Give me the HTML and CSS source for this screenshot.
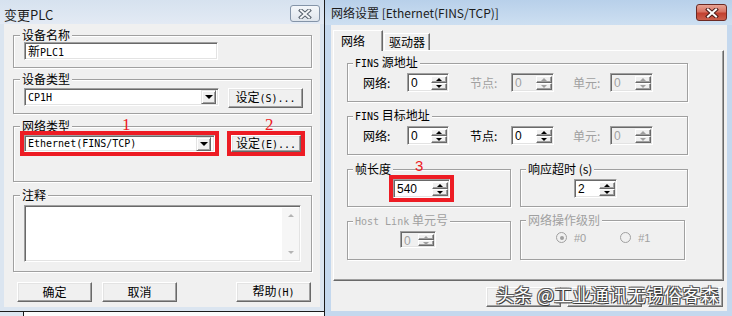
FILE: index.html
```html
<!DOCTYPE html>
<html lang="zh-CN">
<head>
    <meta charset="UTF-8">
    <meta name="viewport" content="width=device-width, initial-scale=1.0">
    <title>变更PLC - 网络设置</title>
    <link rel="stylesheet" href="styles.css">
</head>
<body>
    <div class="screen">
        <!-- left dialog: 变更PLC (inactive) -->
        <div class="left-col">
            <div class="window win-plc">
                <div class="titlebar">
                    <span class="title">变更PLC</span>
                    <span class="close-btn">
                        <svg width="14" height="10" viewBox="0 0 14 10">
                            <path d="M3 1.5 L11 8.5 M11 1.5 L3 8.5" stroke="#56606c" stroke-width="4" stroke-linecap="square"/>
                            <path d="M3 1.5 L11 8.5 M11 1.5 L3 8.5" stroke="#f4f6f8" stroke-width="2" stroke-linecap="square"/>
                        </svg>
                    </span>
                </div>
                <div class="client plc-client">
                    <fieldset class="group g-name">
                        <legend>设备名称</legend>
                        <div class="edit name-edit">新<span class="lat">PLC1</span></div>
                    </fieldset>

                    <fieldset class="group g-type">
                        <legend>设备类型</legend>
                        <div class="ctl-row">
                            <div class="combo combo-type"><span class="lat">CP1H</span><span class="drop"></span></div>
                            <button class="btn btn-set">设定<span class="lat">(S)...</span></button>
                        </div>
                    </fieldset>

                    <fieldset class="group g-net">
                        <legend>网络类型</legend>
                        <div class="ctl-row">
                            <div class="combo combo-net marked"><span class="lat">Ethernet(FINS/TCP)</span><span class="drop"></span></div>
                            <button class="btn btn-set-e marked">设定<span class="lat">(E)...</span></button>
                        </div>
                    </fieldset>

                    <fieldset class="group g-note">
                        <legend>注释</legend>
                        <div class="memo">
                            <div class="vscroll"><i class="sa up"></i><i class="sa dn"></i></div>
                        </div>
                    </fieldset>

                    <div class="btn-row">
                        <button class="btn">确定</button>
                        <button class="btn">取消</button>
                        <button class="btn btn-help">帮助<span class="lat">(H)</span></button>
                    </div>

                    <span class="mark mark-1">1</span>
                    <span class="mark mark-2">2</span>
                </div>
            </div>
            <div class="under">
                <div class="under-a"></div>
                <div class="under-b"></div>
            </div>
        </div>

        <!-- right dialog: 网络设置 (active) -->
        <div class="window win-net">
            <div class="titlebar">
                <span class="title">网络设置 [Ethernet(FINS/TCP)]</span>
                <span class="close-btn red">
                    <svg width="14" height="10" viewBox="0 0 14 10">
                        <path d="M3 1.5 L11 8.5 M11 1.5 L3 8.5" stroke="#4a1c18" stroke-width="4" stroke-linecap="square"/>
                        <path d="M3 1.5 L11 8.5 M11 1.5 L3 8.5" stroke="#ffffff" stroke-width="2" stroke-linecap="square"/>
                    </svg>
                </span>
            </div>
            <div class="client net-client">
                <div class="tabs">
                    <div class="tab active">网络</div>
                    <div class="tab">驱动器</div>
                </div>
                <div class="panel">
                    <fieldset class="group rg g-src">
                        <legend><span class="lat">FINS</span> 源地址</legend>
                        <div class="addr-row">
                            <span class="lbl">网络:</span>
                            <div class="spin"><span class="val">0</span><span class="arrows"><i class="up"></i><i class="dn"></i></span></div>
                            <span class="lbl lbl-2 off">节点:</span>
                            <div class="spin off"><span class="val">0</span><span class="arrows"><i class="up"></i><i class="dn"></i></span></div>
                            <span class="lbl lbl-3 off">单元:</span>
                            <div class="spin off"><span class="val">0</span><span class="arrows"><i class="up"></i><i class="dn"></i></span></div>
                        </div>
                    </fieldset>

                    <fieldset class="group rg g-dst">
                        <legend><span class="lat">FINS</span> 目标地址</legend>
                        <div class="addr-row">
                            <span class="lbl">网络:</span>
                            <div class="spin"><span class="val">0</span><span class="arrows"><i class="up"></i><i class="dn"></i></span></div>
                            <span class="lbl lbl-2">节点:</span>
                            <div class="spin"><span class="val">0</span><span class="arrows"><i class="up"></i><i class="dn"></i></span></div>
                            <span class="lbl lbl-3 off">单元:</span>
                            <div class="spin off"><span class="val">0</span><span class="arrows"><i class="up"></i><i class="dn"></i></span></div>
                        </div>
                    </fieldset>

                    <div class="pair">
                        <fieldset class="group rg g-frame">
                            <legend>帧长度</legend>
                            <div class="spin spin-frame marked"><span class="val">540</span><span class="arrows"><i class="up"></i><i class="dn"></i></span></div>
                        </fieldset>
                        <fieldset class="group rg g-resp">
                            <legend>响应超时 (s)</legend>
                            <div class="spin spin-resp"><span class="val">2</span><span class="arrows"><i class="up"></i><i class="dn"></i></span></div>
                        </fieldset>
                    </div>

                    <div class="pair pair-2">
                        <fieldset class="group rg g-host off">
                            <legend><span class="lat">Host Link</span> 单元号</legend>
                            <div class="spin spin-host off"><span class="val">0</span><span class="arrows"><i class="up"></i><i class="dn"></i></span></div>
                        </fieldset>
                        <fieldset class="group rg g-level off">
                            <legend>网络操作级别</legend>
                            <div class="radios">
                                <span class="radio on"></span><span class="rlab">#0</span>
                                <span class="radio r-2"></span><span class="rlab">#1</span>
                            </div>
                        </fieldset>
                    </div>
                </div>
                <div class="net-btns">
                    <button class="btn"></button>
                    <button class="btn"></button>
                    <button class="btn"></button>
                </div>
            </div>
            <span class="mark mark-3">3</span>
            <span class="watermark">头条 @工业通讯无锡俗客森</span>
        </div>
    </div>
</body>
</html>
```

FILE: styles.css
```css
* {
    margin: 0;
    padding: 0;
    box-sizing: border-box;
}

body {
    font-family: "Noto Sans CJK SC", sans-serif;
    font-size: 12px;
    color: #000;
    background: #fff;
    width: 732px;
    height: 316px;
    overflow: hidden;
}

.screen {
    display: flex;
    width: 732px;
    height: 316px;
}

.lat {
    font-family: "DejaVu Sans Mono", monospace;
    font-size: 10px;
}

/* ---------- windows ---------- */

.window {
    display: flex;
    flex-direction: column;
}

.titlebar {
    display: flex;
    justify-content: space-between;
    align-items: flex-start;
}

.title {
    font-size: 13px;
    line-height: 15px;
    color: #1c1c1c;
}

.close-btn {
    display: flex;
    align-items: center;
    justify-content: center;
    width: 30px;
    height: 17px;
    border: 1px solid #8494a8;
    border-radius: 3px;
    background: linear-gradient(#f4f7fa, #dfe5ec);
}

.close-btn.red {
    width: 31px;
    border-color: #6c2923;
    background: linear-gradient(#e7a394 0%, #d87262 45%, #c2402f 55%, #cb5f4c 100%);
}

.client {
    flex: 1;
    background: #f0f0f0;
}

/* left */
.left-col {
    width: 325px;
    display: flex;
    flex-direction: column;
    border-right: 1px solid #1b1b1b;
}

.win-plc {
    height: 311px;
    background: #dbe5f0;
}

.win-plc .titlebar {
    height: 24px;
    padding: 5px 4px 0 4px;
    background: linear-gradient(#d6e2ef, #e3eaf4);
}

.win-plc .title {
    margin-top: 2px;
}

.plc-client {
    position: relative;
    margin: 0 4px 4px;
    padding: 5px 8px 0 9px;
}

.under {
    flex: 1;
    display: flex;
    border-top: 1px solid #1b1b1b;
}

.under-a {
    width: 23px;
    background: #dde6f0;
}

.under-b {
    flex: 1;
    border-left: 1px solid #1b1b1b;
    background: #fbfbfb;
}

/* right */
.win-net {
    position: relative;
    width: 407px;
    background: #c4d8ee;
}

.win-net .titlebar {
    height: 25px;
    padding: 4px 5px 0 6px;
    background: linear-gradient(#b8d0ea, #cddff1);
}

.win-net .title {
    font-size: 12px;
    margin-top: 1px;
}

.net-client {
    margin: 0 5px 5px 6px;
    padding: 5px 4px 0 2px;
}

/* ---------- group boxes ---------- */

.group {
    border: 1px solid #a0a0a0;
    box-shadow: 1px 1px 0 #fff, inset 1px 1px 0 #fff;
    padding: 0 6px;
    min-width: 0;
}

.group legend {
    padding: 0 2px;
    line-height: 12px;
    background: #f0f0f0;
}

.g-name {
    padding-top: 1px;
    padding-bottom: 7px;
}

.g-type {
    margin-top: 5px;
    padding-top: 3px;
    padding-bottom: 5px;
}

.g-net {
    margin-top: 6px;
    padding-top: 3px;
    padding-bottom: 29px;
}

.g-note {
    margin-top: 7px;
    padding-top: 4px;
    padding-bottom: 9px;
}

/* ---------- classic controls ---------- */

.edit,
.combo,
.memo,
.spin {
    background: #fff;
    border: 1px solid;
    border-color: #a0a0a0 #fff #fff #a0a0a0;
    box-shadow: inset 1px 1px 0 #696969, inset -1px -1px 0 #e3e3e3;
}

.edit {
    width: 194px;
    height: 18px;
    margin-left: 4px;
    padding: 0 3px;
    line-height: 16px;
}

.ctl-row {
    display: flex;
    align-items: flex-start;
    margin-left: 4px;
}

.combo {
    display: flex;
    align-items: center;
    justify-content: space-between;
    padding: 2px 2px 2px 3px;
}

.combo-type {
    width: 195px;
    height: 18px;
}

.combo-net {
    width: 191px;
    height: 17px;
    padding-right: 3px;
}

.drop {
    width: 15px;
    height: 14px;
    display: flex;
    align-items: center;
    justify-content: center;
    background: #f0f0f0;
    border: 1px solid;
    border-color: #e3e3e3 #696969 #696969 #e3e3e3;
    box-shadow: inset 1px 1px 0 #fff, inset -1px -1px 0 #a0a0a0;
}

.drop::after {
    content: "";
    border-left: 4px solid transparent;
    border-right: 4px solid transparent;
    border-top: 4px solid #000;
}

.btn {
    font-family: "Noto Sans CJK SC", sans-serif;
    font-size: 12px;
    color: #000;
    width: 75px;
    height: 20px;
    background: #f0f0f0;
    border: 1px solid;
    border-color: #fff #696969 #696969 #fff;
    box-shadow: inset -1px -1px 0 #a0a0a0, inset 1px 1px 0 #e3e3e3;
    line-height: 16px;
}

.btn-set {
    margin-left: 9px;
}

.btn-set-e {
    width: 70px;
    height: 17px;
    margin-left: 16px;
    line-height: 13px;
}

.marked {
    outline: 4px solid #ed1c24;
}

.memo {
    width: 277px;
    height: 57px;
    margin-left: 4px;
    display: flex;
    justify-content: flex-end;
    padding: 2px 1px 1px 2px;
}

.vscroll {
    width: 17px;
    background: #f6f6f6;
    display: flex;
    flex-direction: column;
    justify-content: space-between;
    align-items: center;
    padding: 6px 0;
}

.sa {
    display: block;
    border-left: 3px solid transparent;
    border-right: 3px solid transparent;
}

.sa.up {
    border-bottom: 3px solid #b4b4b4;
}

.sa.dn {
    border-top: 3px solid #b4b4b4;
}

.btn-row {
    display: flex;
    gap: 10px;
    margin-top: 10px;
    padding-left: 4px;
}

.btn-help {
    margin-left: auto;
    margin-right: 1px;
}

.mark {
    position: absolute;
    font-family: "Liberation Serif", serif;
    font-size: 17px;
    line-height: 17px;
    color: #ed1c24;
}

.mark-1 {
    left: 118px;
    top: 92px;
}

.mark-2 {
    left: 261px;
    top: 92px;
}

.mark-3 {
    left: 90px;
    top: 157px;
    font-family: "Liberation Sans", sans-serif;
    font-size: 15px;
}

/* ---------- tabs ---------- */

.tabs {
    display: flex;
    align-items: flex-end;
    height: 20px;
}

.tab {
    width: 46px;
    height: 17px;
    margin-left: 1px;
    text-align: center;
    line-height: 15px;
    border: 1px solid;
    border-bottom: none;
    border-color: #fff #696969 transparent #fff;
    box-shadow: inset -1px 0 0 #a0a0a0;
}

.tab.active {
    position: relative;
    z-index: 1;
    width: 50px;
    height: 21px;
    margin-left: 0;
    margin-bottom: -1px;
    padding: 2px 0 0 7px;
    text-align: left;
    background: #f0f0f0;
}

.panel {
    width: 391px;
    height: 231px;
    border: 1px solid;
    border-color: #fff #696969 #696969 #fff;
    box-shadow: inset -1px -1px 0 #a0a0a0;
    padding: 5px 0 0 13px;
}

.rg {
    padding-left: 5px;
}

.g-src,
.g-dst {
    width: 341px;
    padding-top: 3px;
    padding-bottom: 9px;
}

.g-dst {
    margin-top: 7px;
}

.addr-row {
    display: grid;
    grid-template-columns: 44px 42px 62px 43px 56px 43px;
    align-items: center;
    margin-left: 10px;
}

.lbl-2 {
    padding-left: 21px;
}

.lbl-3 {
    padding-left: 19px;
}

.off,
.off legend {
    color: #a0a0a0;
}

.pair {
    display: flex;
    gap: 9px;
    margin-top: 8px;
}

.pair-2 {
    margin-top: 7px;
}

.g-frame,
.g-host {
    width: 164px;
}

.g-resp {
    width: 168px;
}

.g-level {
    width: 165px;
}

.g-frame,
.g-resp {
    padding-top: 4px;
    padding-bottom: 8px;
}

.g-host,
.g-level {
    padding-top: 3px;
    padding-bottom: 11px;
}

/* spin box */
.spin {
    display: flex;
    height: 19px;
    padding: 2px 1px 1px 2px;
}

.spin .val {
    flex: 1;
    font-family: "Liberation Sans", sans-serif;
    font-size: 12px;
    line-height: 15px;
    padding-left: 1px;
}

.spin .arrows {
    width: 16px;
    display: flex;
    flex-direction: column;
}

.spin .arrows i {
    flex: 1;
    display: flex;
    align-items: center;
    justify-content: center;
    background: #f0f0f0;
    border: 1px solid;
    border-color: #fff #696969 #696969 #fff;
    box-shadow: inset -1px -1px 0 #a0a0a0;
}

.spin .arrows i::after {
    content: "";
    border-left: 3px solid transparent;
    border-right: 3px solid transparent;
}

.spin .arrows .up::after {
    border-bottom: 3px solid #000;
}

.spin .arrows .dn::after {
    border-top: 3px solid #000;
}

.spin.off {
    background: #f0f0f0;
    color: #a0a0a0;
}

.spin.off .arrows .up::after {
    border-bottom-color: #a0a0a0;
}

.spin.off .arrows .dn::after {
    border-top-color: #a0a0a0;
}

.spin-frame {
    width: 57px;
    margin-left: 40px;
}

.spin-resp {
    width: 43px;
    margin-left: 48px;
}

.spin-host {
    width: 36px;
    height: 17px;
    margin-left: 47px;
}

.radios {
    display: flex;
    align-items: center;
    height: 17px;
    margin-left: 30px;
}

.radio {
    width: 11px;
    height: 11px;
    border-radius: 50%;
    border: 1px solid #a0a0a0;
    background: #f0f0f0;
    display: flex;
    align-items: center;
    justify-content: center;
}

.radio.on::after {
    content: "";
    width: 4px;
    height: 4px;
    border-radius: 50%;
    background: #a0a0a0;
}

.r-2 {
    margin-left: 34px;
}

.rlab {
    font-family: "Liberation Sans", sans-serif;
    font-size: 11px;
    color: #a0a0a0;
    margin-left: 7px;
}

.net-btns {
    display: flex;
    justify-content: flex-end;
    gap: 6px;
    margin-top: 6px;
}

.watermark {
    position: absolute;
    left: 171px;
    top: 283px;
    font-size: 18px;
    line-height: 22px;
    letter-spacing: 0.3px;
    color: #fff;
    text-shadow: 1px 1px 0 #3a3a3a, -1px -1px 0 #5a5a5a, 1px -1px 0 #5a5a5a, -1px 1px 0 #5a5a5a;
}
```
